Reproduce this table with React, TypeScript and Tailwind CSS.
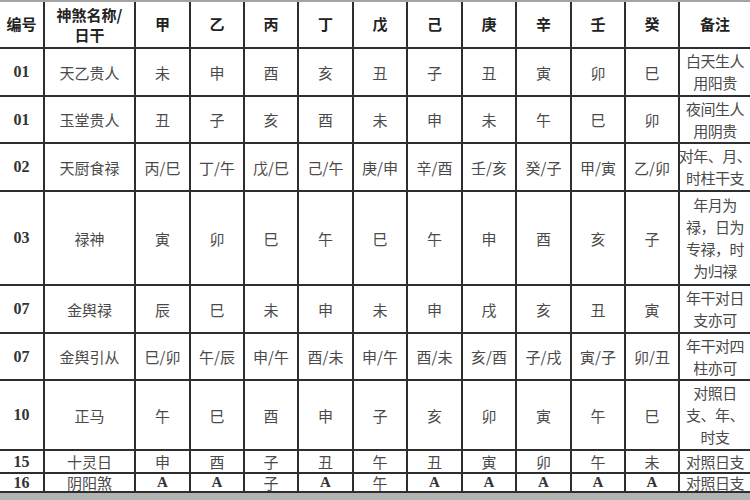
import React from 'react';

const stems = ['甲', '乙', '丙', '丁', '戊', '己', '庚', '辛', '壬', '癸'];

type Row = { no: string; name: string; values: string[]; note: string[] };

const rows: Row[] = [
  { no: '01', name: '天乙贵人', values: ['未', '申', '酉', '亥', '丑', '子', '丑', '寅', '卯', '巳'], note: ['白天生人', '用阳贵'] },
  { no: '01', name: '玉堂贵人', values: ['丑', '子', '亥', '酉', '未', '申', '未', '午', '巳', '卯'], note: ['夜间生人', '用阴贵'] },
  { no: '02', name: '天厨食禄', values: ['丙/巳', '丁/午', '戊/巳', '己/午', '庚/申', '辛/酉', '壬/亥', '癸/子', '甲/寅', '乙/卯'], note: ['对年、月、', '时柱干支'] },
  { no: '03', name: '禄神', values: ['寅', '卯', '巳', '午', '巳', '午', '申', '酉', '亥', '子'], note: ['年月为', '禄，日为', '专禄，时', '为归禄'] },
  { no: '07', name: '金舆禄', values: ['辰', '巳', '未', '申', '未', '申', '戌', '亥', '丑', '寅'], note: ['年干对日', '支亦可'] },
  { no: '07', name: '金舆引从', values: ['巳/卯', '午/辰', '申/午', '酉/未', '申/午', '酉/未', '亥/酉', '子/戌', '寅/子', '卯/丑'], note: ['年干对四', '柱亦可'] },
  { no: '10', name: '正马', values: ['午', '巳', '酉', '申', '子', '亥', '卯', '寅', '午', '巳'], note: ['对照日', '支、年、', '时支'] },
  { no: '15', name: '十灵日', values: ['申', '酉', '子', '丑', '午', '丑', '寅', '卯', '午', '未'], note: ['对照日支'] },
  { no: '16', name: '阴阳煞', values: ['A', 'A', '子', 'A', '午', 'A', 'A', 'A', 'A', 'A'], note: ['对照日支'] },
];

const cell = 'bg-white flex items-center justify-center text-center overflow-visible';
const cjk = "font-['Noto_Sans_CJK_SC',sans-serif]";
const serif = "font-['Liberation_Serif','Noto_Sans_CJK_SC',serif]";

export default function App() {
  return (
    <div className="w-[750px] h-[500px] overflow-hidden bg-white border-t-2 border-[#a3a3a3]">
      <div className="grid grid-cols-[43px_89px_53px_52px_52px_53px_52px_53px_52px_53px_52px_52px_70px] grid-rows-[45px_46px_45px_46px_92px_46px_45px_68px_21px_17px_7px] gap-[2px] bg-[#2e2e2e]">
        {/* Header */}
        <div className={`${cell} ${cjk} font-bold text-[15px] text-[#222]`}>编号</div>
        <div className={`${cell} ${cjk} font-bold text-[15px] leading-[20px] text-[#222]`}>
          神煞名称/<br />日干
        </div>
        {stems.map((s) => (
          <div key={s} className={`${cell} ${cjk} font-bold text-[15px] text-[#222]`}>{s}</div>
        ))}
        <div className={`${cell} ${cjk} font-bold text-[15px] text-[#222]`}>备注</div>

        {/* Body */}
        {rows.map((r, i) => (
          <React.Fragment key={i}>
            <div className={`${cell} ${serif} font-bold text-[16px] leading-none text-[#333]`}>{r.no}</div>
            <div className={`${cell} ${cjk} text-[15px] leading-none text-[#4a4a4a]`}>{r.name}</div>
            {r.values.map((v, j) => (
              <div
                key={j}
                className={`${cell} text-[15px] leading-none whitespace-nowrap ${
                  v === 'A' ? `${serif} font-bold text-[#333]` : `${cjk} text-[#4a4a4a]`
                }`}
              >
                {v}
              </div>
            ))}
            <div className={`${cell} ${cjk} flex-col text-[15px] leading-[22px] text-[#4a4a4a] whitespace-nowrap tracking-[-0.5px]`}>
              {r.note.map((n, k) => (
                <span key={k} className={r.note.length === 1 ? 'leading-none' : ''}>{n}</span>
              ))}
            </div>
          </React.Fragment>
        ))}

        {/* bottom band */}
        <div className="col-span-13 bg-[#b3b3b3]" />
      </div>
    </div>
  );
}
